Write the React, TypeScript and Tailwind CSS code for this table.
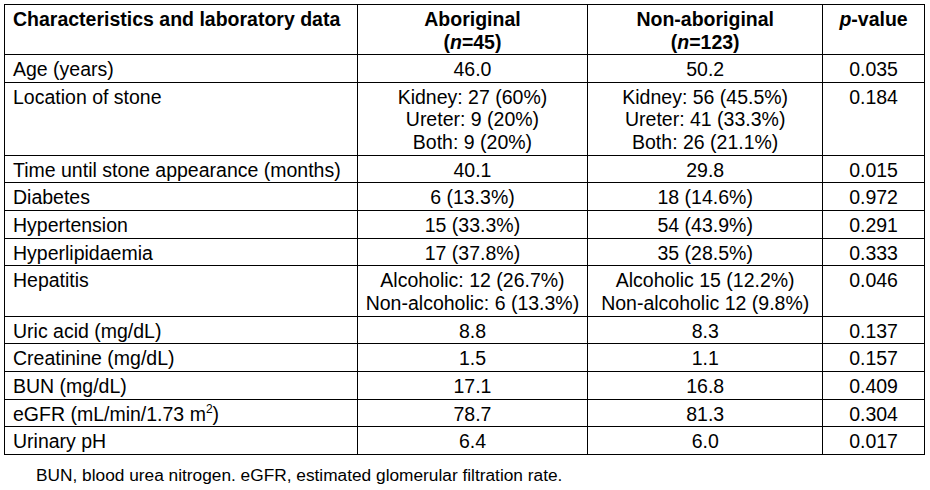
import React from "react";

type Row = { label: React.ReactNode; a: React.ReactNode; b: React.ReactNode; p: string };

const rows: Row[] = [
  { label: "Age (years)", a: "46.0", b: "50.2", p: "0.035" },
  {
    label: "Location of stone",
    a: (<>Kidney: 27 (60%)<br />Ureter: 9 (20%)<br />Both: 9 (20%)</>),
    b: (<>Kidney: 56 (45.5%)<br />Ureter: 41 (33.3%)<br />Both: 26 (21.1%)</>),
    p: "0.184",
  },
  { label: "Time until stone appearance (months)", a: "40.1", b: "29.8", p: "0.015" },
  { label: "Diabetes", a: "6 (13.3%)", b: "18 (14.6%)", p: "0.972" },
  { label: "Hypertension", a: "15 (33.3%)", b: "54 (43.9%)", p: "0.291" },
  { label: "Hyperlipidaemia", a: "17 (37.8%)", b: "35 (28.5%)", p: "0.333" },
  {
    label: "Hepatitis",
    a: (<>Alcoholic: 12 (26.7%)<br />Non-alcoholic: 6 (13.3%)</>),
    b: (<>Alcoholic 15 (12.2%)<br />Non-alcoholic 12 (9.8%)</>),
    p: "0.046",
  },
  { label: "Uric acid (mg/dL)", a: "8.8", b: "8.3", p: "0.137" },
  { label: "Creatinine (mg/dL)", a: "1.5", b: "1.1", p: "0.157" },
  { label: "BUN (mg/dL)", a: "17.1", b: "16.8", p: "0.409" },
  {
    label: (<>eGFR (mL/min/1.73 m<sup className="text-[12px] top-[-8px]">2</sup>)</>),
    a: "78.7",
    b: "81.3",
    p: "0.304",
  },
  { label: "Urinary pH", a: "6.4", b: "6.0", p: "0.017" },
];

const cell = "border border-black px-[8px] pt-[3px] pb-[1.2px] align-top";

export default function App() {
  return (
    <div
      className="w-[930px] h-[490px] bg-white text-black overflow-hidden"
      style={{ fontFamily: '"Liberation Sans", Arial, sans-serif' }}
    >
      <div className="pl-[4px] pt-[4px]">
        <table className="border-collapse w-[921px] text-[19.5px] leading-[22.5px]">
          <colgroup>
            <col className="w-[353px]" />
            <col className="w-[231px]" />
            <col className="w-[235px]" />
            <col className="w-[102px]" />
          </colgroup>
          <thead>
            <tr className="font-bold">
              <th className={`${cell} text-left`}>Characteristics and laboratory data</th>
              <th className={`${cell} text-center`}>
                Aboriginal
                <br />(<i>n</i>=45)
              </th>
              <th className={`${cell} text-center`}>
                Non-aboriginal
                <br />(<i>n</i>=123)
              </th>
              <th className={`${cell} text-center`}>
                <i>p</i>-value
              </th>
            </tr>
          </thead>
          <tbody>
            {rows.map((r, i) => (
              <tr key={i}>
                <td className={`${cell} text-left`}>{r.label}</td>
                <td className={`${cell} text-center`}>{r.a}</td>
                <td className={`${cell} text-center`}>{r.b}</td>
                <td className={`${cell} text-center`}>{r.p}</td>
              </tr>
            ))}
          </tbody>
        </table>
        <p className="pl-[32px] pt-[10px] text-[17.3px] leading-[20px]">
          BUN, blood urea nitrogen. eGFR, estimated glomerular filtration rate.
        </p>
      </div>
    </div>
  );
}
